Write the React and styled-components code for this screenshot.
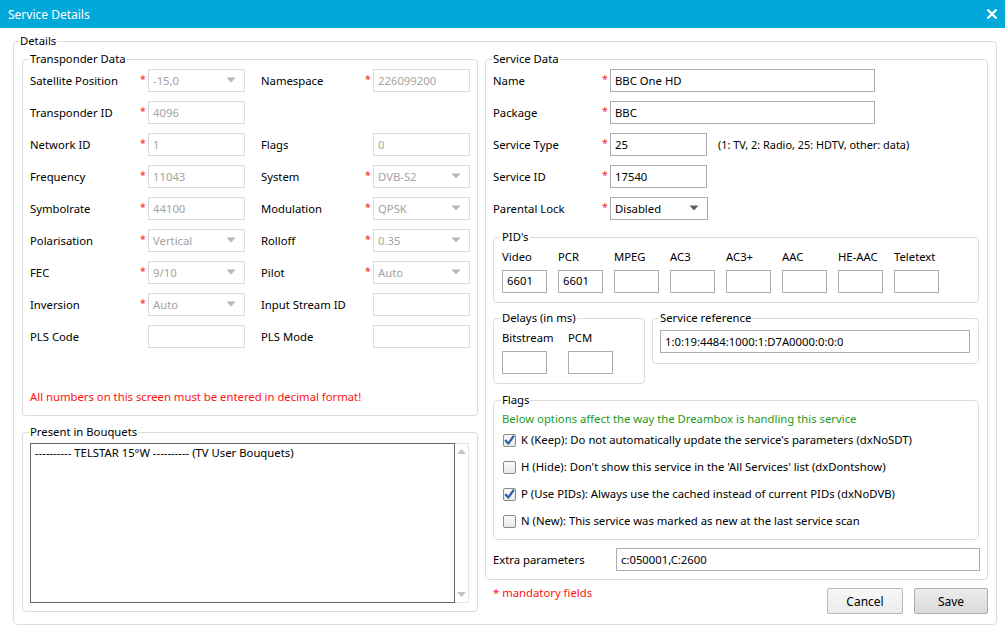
import React from 'react'
import styled, { createGlobalStyle } from 'styled-components';

const GlobalStyle = createGlobalStyle`
html, body {
margin: 0;
padding: 0;
background: #ffffff;
}
body {
font-family: "Noto Sans", "Liberation Sans", sans-serif;
font-size: 11.3px;
color: #000;
}
* { box-sizing: border-box; }
`;

const transponderRows = [
  [
    { label: 'Satellite Position', req: true, value: '-15,0', select: true },
    { label: 'Namespace', req: true, value: '226099200' },
  ],
  [{ label: 'Transponder ID', req: true, value: '4096' }, null],
  [
    { label: 'Network ID', req: true, value: '1' },
    { label: 'Flags', value: '0' },
  ],
  [
    { label: 'Frequency', req: true, value: '11043' },
    { label: 'System', req: true, value: 'DVB-S2', select: true },
  ],
  [
    { label: 'Symbolrate', req: true, value: '44100' },
    { label: 'Modulation', req: true, value: 'QPSK', select: true },
  ],
  [
    { label: 'Polarisation', req: true, value: 'Vertical', select: true },
    { label: 'Rolloff', req: true, value: '0.35', select: true },
  ],
  [
    { label: 'FEC', req: true, value: '9/10', select: true },
    { label: 'Pilot', req: true, value: 'Auto', select: true },
  ],
  [
    { label: 'Inversion', req: true, value: 'Auto', select: true },
    { label: 'Input Stream ID', value: '' },
  ],
  [
    { label: 'PLS Code', value: '' },
    { label: 'PLS Mode', value: '' },
  ],
];

const pids = [
  { label: 'Video', value: '6601' },
  { label: 'PCR', value: '6601' },
  { label: 'MPEG', value: '' },
  { label: 'AC3', value: '' },
  { label: 'AC3+', value: '' },
  { label: 'AAC', value: '' },
  { label: 'HE-AAC', value: '' },
  { label: 'Teletext', value: '' },
];

const flags = [
  { checked: true, text: "K (Keep): Do not automatically update the service's parameters (dxNoSDT)" },
  { checked: false, text: "H (Hide): Don't show this service in the 'All Services' list (dxDontshow)" },
  { checked: true, text: 'P (Use PIDs): Always use the cached instead of current PIDs (dxNoDVB)' },
  { checked: false, text: 'N (New): This service was marked as new at the last service scan' },
];

function Arrow({ disabled }) {
  return (
    <svg width="10" height="6" viewBox="0 0 10 6">
      <path d="M0.5 0.5 L9.5 0.5 L5 5.5 Z" fill={disabled ? '#b4b4b4' : '#606060'} />
    </svg>
  );
}

function TransponderCell({ item }) {
  if (!item) return (<><span /><span /></>);
  return (
    <>
      <LabelCell>
        <span>{item.label}</span>
        {item.req && <Star>*</Star>}
      </LabelCell>
      <Field disabled>
        <FieldText>{item.value}</FieldText>
        {item.select && <Arrow disabled />}
      </Field>
    </>
  );
}

function Check({ checked }) {
  return (
    <CheckBox>
      {checked && (
        <svg width="11" height="11" viewBox="0 0 11 11">
          <path d="M1.8 5.8 L4.3 8.6 L9.4 1.4" fill="none" stroke="#2a64a8" strokeWidth="2.3" strokeLinecap="round" strokeLinejoin="round" />
        </svg>
      )}
    </CheckBox>
  );
}

function App() {
  return (
    <>
      <GlobalStyle />
      <Window>
        <TitleBar>
          <Title>Service Details</Title>
          <svg width="12" height="12" viewBox="0 0 12 12">
            <path d="M1.5 1.5 L10.5 10.5 M10.5 1.5 L1.5 10.5" stroke="#fff" strokeWidth="2.4" />
          </svg>
        </TitleBar>
        <Body>
          <Group $outer>
            <Legend $ml="-3px">Details</Legend>
            <Columns>
              <LeftColumn>
                <Group $pad="2px 7px 10px">
                  <Legend>Transponder Data</Legend>
                  <TransponderGrid>
                    {transponderRows.map((row, i) => (
                      <React.Fragment key={i}>
                        <TransponderCell item={row[0]} />
                        <span />
                        <TransponderCell item={row[1]} />
                      </React.Fragment>
                    ))}
                  </TransponderGrid>
                  <Note>All numbers on this screen must be entered in decimal format!</Note>
                </Group>
                <Group $pad="3px 8px 8px 7px" $mt="8px">
                  <Legend>Present in Bouquets</Legend>
                  <ListBox>
                    <ListArea>
                      <ListItem>---------- TELSTAR 15°W ---------- (TV User Bouquets)</ListItem>
                    </ListArea>
                    <ScrollBar>
                      <svg width="9" height="5" viewBox="0 0 9 5"><path d="M0 5 L9 5 L4.5 0 Z" fill="#c4c4c4" /></svg>
                      <svg width="9" height="5" viewBox="0 0 9 5"><path d="M0 0 L9 0 L4.5 5 Z" fill="#c4c4c4" /></svg>
                    </ScrollBar>
                  </ListBox>
                </Group>
              </LeftColumn>

              <RightColumn>
                <Group $pad="2px 7px 8px">
                  <Legend>Service Data</Legend>
                  <Rows>
                    <FormRow>
                      <FormLabel><span>Name</span><Star>*</Star></FormLabel>
                      <Field $w="265px"><FieldText>BBC One HD</FieldText></Field>
                    </FormRow>
                    <FormRow>
                      <FormLabel><span>Package</span><Star>*</Star></FormLabel>
                      <Field $w="265px"><FieldText>BBC</FieldText></Field>
                    </FormRow>
                    <FormRow>
                      <FormLabel><span>Service Type</span><Star>*</Star></FormLabel>
                      <Field $w="97px"><FieldText>25</FieldText></Field>
                      <Hint>(1: TV, 2: Radio, 25: HDTV, other: data)</Hint>
                    </FormRow>
                    <FormRow>
                      <FormLabel><span>Service ID</span><Star>*</Star></FormLabel>
                      <Field $w="97px"><FieldText>17540</FieldText></Field>
                    </FormRow>
                    <FormRow>
                      <FormLabel><span>Parental Lock</span><Star>*</Star></FormLabel>
                      <Field $w="98px"><FieldText>Disabled</FieldText><Arrow /></Field>
                    </FormRow>
                  </Rows>

                  <Group $pad="4px 8px 9px" $mt="9px" $w="486px">
                    <Legend>PID's</Legend>
                    <PidGrid>
                      {pids.map((p) => (
                        <PidCell key={p.label}>
                          <span>{p.label}</span>
                          <Field $w="45px"><FieldText>{p.value}</FieldText></Field>
                        </PidCell>
                      ))}
                    </PidGrid>
                  </Group>

                  <SubRow>
                    <Group $pad="4px 8px 9px" $w="152px">
                      <Legend>Delays (in ms)</Legend>
                      <DelayGrid>
                        <PidCell>
                          <span>Bitstream</span>
                          <Field $w="45px" />
                        </PidCell>
                        <PidCell>
                          <span>PCM</span>
                          <Field $w="45px" />
                        </PidCell>
                      </DelayGrid>
                    </Group>
                    <Group $pad="4px 7px 10px" $w="327px">
                      <Legend>Service reference</Legend>
                      <Field $w="310px"><FieldText>1:0:19:4484:1000:1:D7A0000:0:0:0</FieldText></Field>
                    </Group>
                  </SubRow>

                  <Group $pad="3px 8px 10px" $mt="8px" $w="486px">
                    <Legend>Flags</Legend>
                    <GreenText>Below options affect the way the Dreambox is handling this service</GreenText>
                    <FlagList>
                      {flags.map((f) => (
                        <FlagRow key={f.text}>
                          <Check checked={f.checked} />
                          <span>{f.text}</span>
                        </FlagRow>
                      ))}
                    </FlagList>
                  </Group>

                  <FormRow $mt="8px">
                    <FormLabel $w="123px"><span>Extra parameters</span></FormLabel>
                    <Field $w="364px"><FieldText>c:050001,C:2600</FieldText></Field>
                  </FormRow>
                </Group>

                <Footer>
                  <Mandatory>* mandatory fields</Mandatory>
                  <Buttons>
                    <Button>Cancel</Button>
                    <Button $default>Save</Button>
                  </Buttons>
                </Footer>
              </RightColumn>
            </Columns>
          </Group>
        </Body>
      </Window>
    </>
  );
}

export default App;

const Window = styled.div`
width: 1005px;
height: 633px;
background: #fff;
overflow: hidden;
`;

const TitleBar = styled.div`
height: 28px;
background: #02a8d9;
display: flex;
align-items: center;
justify-content: space-between;
padding: 0 7px 0 8px;
`;

const Title = styled.span`
color: #fff;
font-size: 12px;
`;

const Body = styled.div`
padding: 5px 8px 0 13px;
`;

const Group = styled.fieldset`
margin: ${(p) => (p.$mt ? `${p.$mt} 0 0` : '0')};
padding: ${(p) => (p.$outer ? '2px 8px 10px 8px' : p.$pad || '0 8px 8px')};
border: 1px solid #dcdcdc;
border-radius: 4px;
min-width: 0;
width: ${(p) => (p.$outer ? '984px' : p.$w || 'auto')};
`;

const Legend = styled.legend`
padding: 0 1px;
margin-left: ${(p) => p.$ml || '-1px'};
line-height: 16px;
height: 16px;
white-space: nowrap;
`;

const Columns = styled.div`
display: flex;
gap: 7px;
align-items: flex-start;
`;

const LeftColumn = styled.div`
width: 456px;
display: flex;
flex-direction: column;
`;

const RightColumn = styled.div`
width: 504px;
display: flex;
flex-direction: column;
`;

const TransponderGrid = styled.div`
display: grid;
grid-template-columns: 118px 97px 16px 112px 97px;
grid-auto-rows: 23px;
row-gap: 9px;
align-items: center;
`;

const LabelCell = styled.div`
display: flex;
align-items: center;
justify-content: space-between;
white-space: nowrap;
`;

const Star = styled.span`
color: #f22;
width: 8px;
font-size: 10.5px;
margin-top: -4px;
`;

const Field = styled.div`
height: 23px;
width: ${(p) => p.$w || 'auto'};
border: 1px solid ${(p) => (p.disabled ? '#dcdcdc' : '#adadad')};
background: #fff;
color: ${(p) => (p.disabled ? '#a3a3a3' : '#000')};
display: flex;
align-items: center;
justify-content: space-between;
padding: 0 8px 1px 4px;
flex-shrink: 0;
`;

const FieldText = styled.span`
white-space: nowrap;
overflow: hidden;
`;

const Note = styled.div`
color: #ff1010;
margin-top: 41px;
line-height: 16px;
`;

const ListBox = styled.div`
display: flex;
height: 160px;
`;

const ListArea = styled.div`
flex: 1;
border: 1px solid #646464;
padding: 1px 4px;
`;

const ListItem = styled.div`
line-height: 16px;
white-space: nowrap;
`;

const ScrollBar = styled.div`
width: 14px;
border: 1px solid #e4e4e4;
border-left: none;
display: flex;
flex-direction: column;
justify-content: space-between;
align-items: center;
padding: 5px 0 5px;
`;

const Rows = styled.div`
display: flex;
flex-direction: column;
gap: 9px;
`;

const FormRow = styled.div`
display: flex;
align-items: center;
height: 23px;
margin-top: ${(p) => p.$mt || '0'};
`;

const FormLabel = styled.div`
width: ${(p) => p.$w || '117px'};
display: flex;
align-items: center;
justify-content: space-between;
white-space: nowrap;
flex-shrink: 0;
`;

const Hint = styled.span`
margin-left: 11px;
font-size: 10.9px;
white-space: nowrap;
`;

const PidGrid = styled.div`
display: grid;
grid-template-columns: repeat(8, 56px);
`;

const DelayGrid = styled.div`
display: grid;
grid-template-columns: repeat(2, 66px);
`;

const PidCell = styled.div`
display: flex;
flex-direction: column;
gap: 5px;
line-height: 16px;
white-space: nowrap;
`;

const SubRow = styled.div`
display: flex;
gap: 7px;
align-items: flex-start;
margin-top: 7px;
`;

const GreenText = styled.div`
color: #1c9a1c;
line-height: 16px;
white-space: nowrap;
`;

const FlagList = styled.div`
display: flex;
flex-direction: column;
gap: 11px;
margin-top: 5px;
padding-left: 1px;
`;

const FlagRow = styled.div`
display: flex;
align-items: center;
gap: 5px;
line-height: 16px;
white-space: nowrap;
`;

const CheckBox = styled.span`
width: 13px;
height: 13px;
border: 1px solid #8a8a8a;
border-radius: 2px;
background: linear-gradient(#fafafa, #eaeaea);
display: flex;
align-items: center;
justify-content: center;
flex-shrink: 0;
`;

const Footer = styled.div`
display: flex;
justify-content: space-between;
align-items: flex-start;
padding-left: 8px;
`;

const Mandatory = styled.span`
color: #ff1010;
margin-top: 5px;
line-height: 16px;
`;

const Buttons = styled.div`
display: flex;
gap: 11px;
margin-top: 8px;
`;

const Button = styled.button`
width: ${(p) => (p.$default ? '74px' : '76px')};
height: 26px;
font-family: inherit;
font-size: 12px;
color: #000;
border: 1px solid ${(p) => (p.$default ? '#acacac' : '#b8b8b8')};
border-radius: 2px;
background: ${(p) => (p.$default ? 'linear-gradient(#ececec, #dadada)' : 'linear-gradient(#f7f7f7, #ebebeb)')};
padding: 0;
`;
